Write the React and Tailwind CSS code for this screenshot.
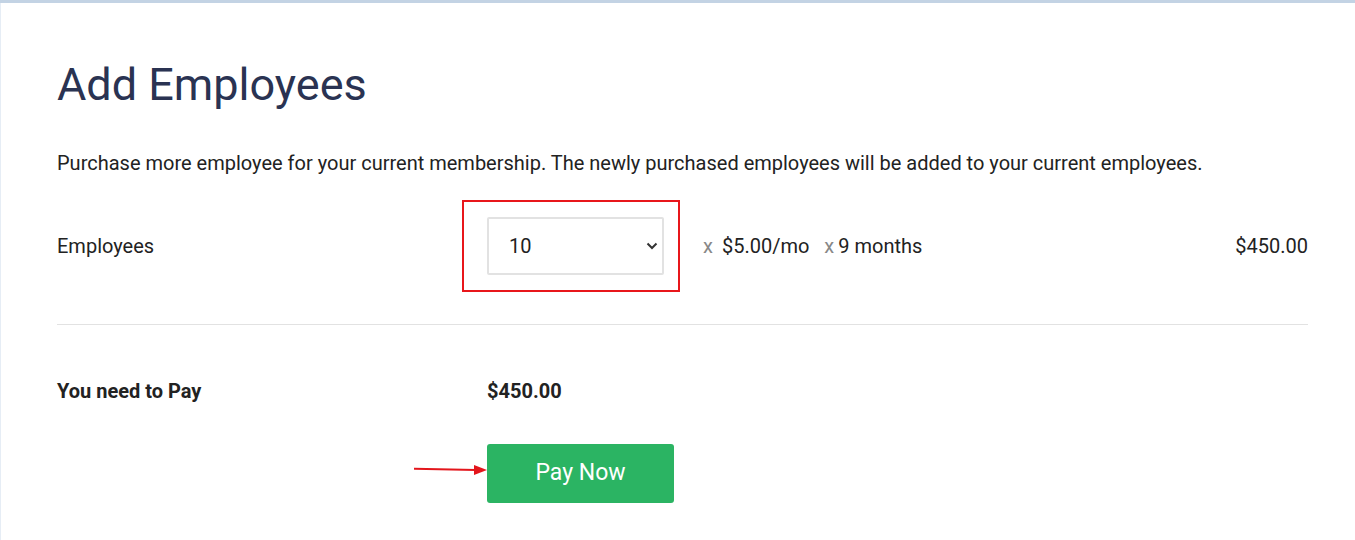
import React from "react";

export default function App() {
  return (
    <div className="w-[1355px] h-[540px] bg-white border-t-[3px] border-[#c3d3e4] overflow-hidden" style={{ fontFamily: "Roboto, 'Liberation Sans', sans-serif" }}>
      <div className="h-full border-l border-[#e6edf5] pl-[56px] pr-[47px] text-[#222]">
        <h1 className="text-[45px] leading-none text-[#2a3352] pt-[59px]">Add Employees</h1>
        <p className="text-[20px] mt-[44px] leading-[24px] text-[#222]">
          Purchase more employee for your current membership. The newly purchased employees will be added to your current employees.
        </p>
        <div className="flex items-center mt-[25px] text-[20px]">
          <div className="w-[405px]">Employees</div>
          <div className="border-2 border-[#e8161b] w-[218px] h-[92px] flex items-center pl-[23px]">
            <div className="w-[177px] h-[58px] border-2 border-[#e2e2e2] rounded-[2px] flex items-center justify-between pl-[20px] pr-[4px]">
              <span>10</span>
              <svg width="12" height="8" viewBox="0 0 12 8">
                <path d="M1.5 1.5 L6 6 L10.5 1.5" fill="none" stroke="#333" strokeWidth="2" />
              </svg>
            </div>
          </div>
          <div className="ml-[23px] flex items-center">
            <span className="text-[#888]">x</span>
            <span className="ml-[9px]">$5.00/mo</span>
            <span className="text-[#888] ml-[15px]">x</span>
            <span className="ml-[4px]">9 months</span>
          </div>
          <div className="ml-auto">$450.00</div>
        </div>
        <div className="border-t border-[#e2e2e2] mt-[32px]" />
        <div className="flex items-center mt-[51px] font-bold text-[20px] leading-[30px]">
          <div className="w-[430px]">You need to Pay</div>
          <div>$450.00</div>
        </div>
        <div className="flex items-center mt-[38px]">
          <div className="w-[357px]" />
          <svg width="73" height="12" viewBox="0 0 73 12" className="mb-[8px]">
            <path d="M0 4.8 L62 6" stroke="#e3161c" strokeWidth="2" />
            <path d="M60 1 L73 6 L60 11 Z" fill="#e3161c" />
          </svg>
          <button className="w-[187px] h-[59px] bg-[#2bb463] rounded-[3px] text-white text-[23px]">Pay Now</button>
        </div>
      </div>
    </div>
  );
}
